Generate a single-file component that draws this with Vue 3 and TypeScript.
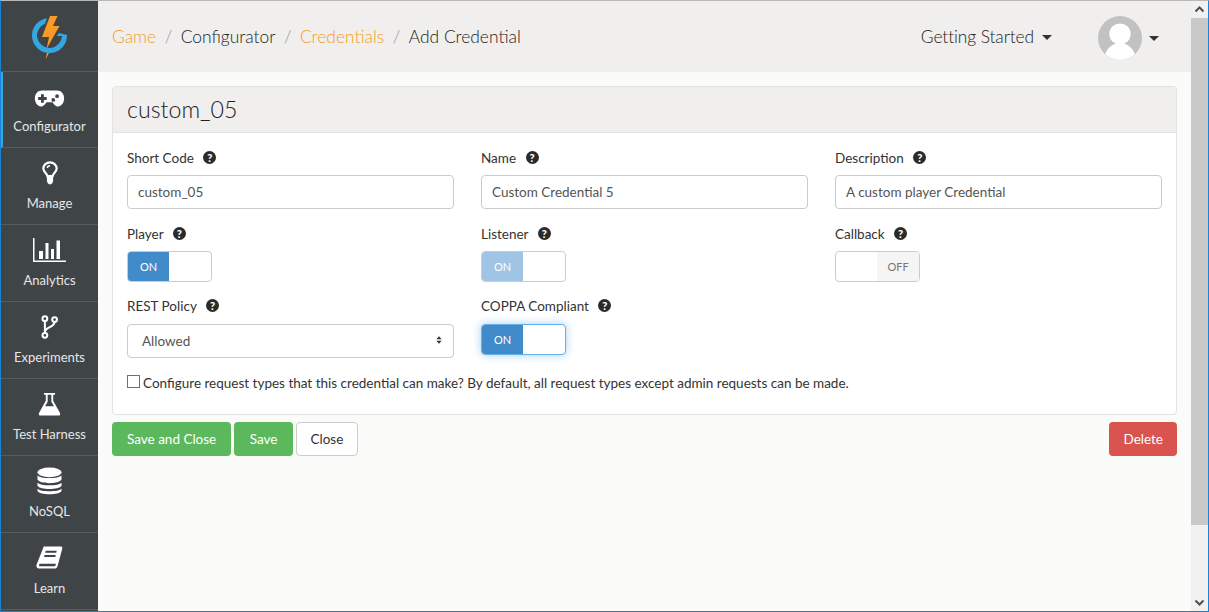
<script setup lang="ts">
const navItems = [
  { label: 'Configurator', icon: 'game', active: true },
  { label: 'Manage', icon: 'bulb', active: false },
  { label: 'Analytics', icon: 'chart', active: false },
  { label: 'Experiments', icon: 'fork', active: false },
  { label: 'Test Harness', icon: 'flask', active: false },
  { label: 'NoSQL', icon: 'db', active: false },
  { label: 'Learn', icon: 'book', active: false },
]
</script>

<template>
  <div class="window">
    <aside class="sidebar">
      <div class="logo">
        <svg width="36" height="44" viewBox="0 0 36 44">
          <path d="M15 2.200 A17.500 17.500 0 1 0 35 19 L27 17 L24.500 20 L30 20 A12.500 12.500 0 1 1 13 7.800 Z" fill="#35a7e0" />
          <path d="M18 0 H25.500 L21 10 H27.500 L14.500 33 L17 21 H10 Z" fill="#f79a28" />
          <path d="M15 37 L13.500 43.500 L17 37 Z" fill="#f79a28" />
        </svg>
      </div>
      <a v-for="item in navItems" :key="item.label" class="nav-item" :class="{ active: item.active }">
        <div class="nav-icon">
          <svg v-if="item.icon === 'game'" width="31" height="17" viewBox="0 1 32 18">
            <path fill-rule="evenodd" fill="#fff" d="M8 1.500 H24 C28.500 1.500 31.500 5 31.500 10 C31.500 14.500 28.500 18.500 25 18.500 C22 18.500 20.500 15.500 19 14 H13 C11.500 15.500 10 18.500 7 18.500 C3.500 18.500 0.500 14.500 0.500 10 C0.500 5 3.500 1.500 8 1.500 Z M7 5.500 V8.500 H4 V11.500 H7 V14.500 H10 V11.500 H13 V8.500 H10 V5.500 Z M24 5.500 A2 2 0 1 0 24 9.500 A2 2 0 1 0 24 5.500 Z M20 9.500 A2 2 0 1 0 20 13.500 A2 2 0 1 0 20 9.500 Z" />
          </svg>
          <svg v-else-if="item.icon === 'bulb'" width="16" height="24" viewBox="0 0 18 27">
            <path fill="none" stroke="#fff" stroke-width="2.400" d="M6 17 C5.500 13.500 1.500 12.500 1.500 8.500 C1.500 4.500 5 1.500 9 1.500 C13 1.500 16.500 4.500 16.500 8.500 C16.500 12.500 12.500 13.500 12 17 Z" />
            <path fill="none" stroke="#fff" stroke-width="1.500" d="M6 8 C6 6.500 7.200 5.300 9 5.300" />
            <path fill="#fff" d="M5.500 18 H12.500 V22 C12.500 24 11 26.500 9 26.500 C7 26.500 5.500 24 5.500 22 Z" />
          </svg>
          <svg v-else-if="item.icon === 'chart'" width="33" height="24" viewBox="0 0 33 24">
            <path fill="#fff" d="M0 0 H1.500 V22.500 H33 V24 H0 Z M6 13 H10 V21 H6 Z M12.500 5 H15.500 V21 H12.500 Z M18 11 H21 V21 H18 Z M23.500 2.500 H27 V21 H23.500 Z" />
          </svg>
          <svg v-else-if="item.icon === 'fork'" width="17" height="24" viewBox="0 0 18 26">
            <g fill="none" stroke="#fff" stroke-width="2.200">
              <circle cx="4" cy="4" r="2.600" />
              <circle cx="14.500" cy="5" r="2.600" />
              <circle cx="4" cy="22" r="2.600" />
              <path d="M4 6.500 V19.500 M14.500 7.500 C14.500 13 5 13 4 18" />
            </g>
          </svg>
          <svg v-else-if="item.icon === 'flask'" width="23" height="24" viewBox="0 0 24 26">
            <path fill-rule="evenodd" fill="#fff" d="M6 1 H18 V3 H16 V9.500 L23.500 23 C24 24.500 23 25.500 22 25.500 H2 C1 25.500 0 24.500 0.500 23 L8 9.500 V3 H6 Z M10 3 V10.500 L7.200 15.500 H16.800 L14 10.500 V3 Z" />
          </svg>
          <svg v-else-if="item.icon === 'db'" width="25" height="28" viewBox="0 0 26 29">
            <g fill="#fff">
              <ellipse cx="13" cy="5.500" rx="12.500" ry="5" />
              <path d="M0.500 8.500 C3 12.500 23 12.500 25.500 8.500 V13 C23 18 3 18 0.500 13 Z" />
              <path d="M0.500 16 C3 20 23 20 25.500 16 V19.500 C23 24 3 24 0.500 19.500 Z" />
              <path d="M0.500 22.500 C3 26 23 26 25.500 22.500 V25 C23 29.500 3 29.500 0.500 25 Z" />
            </g>
          </svg>
          <svg v-else-if="item.icon === 'book'" width="27" height="24" viewBox="0 0 28 25">
            <path fill-rule="evenodd" fill="#fff" d="M8 0.500 H26 C27.500 0.500 27.500 2 27.200 3 L22.500 20.500 C22 22.500 21 23.500 19 23.500 H3.500 C1 23.500 0 22 0.500 19.500 Z M10 5 L9.500 7 H21 L21.500 5 Z M8.800 9.500 L8.300 11.500 H20 L20.500 9.500 Z M4.500 18.500 C3 18.500 2.700 20 3.500 21 H19 C19.700 21 20.200 20.500 20.400 19.700 L20.700 18.500 Z" />
          </svg>
        </div>
        <span>{{ item.label }}</span>
      </a>
    </aside>

    <div class="main">
      <header class="topbar">
        <nav class="crumbs">
          <a class="link">Game</a><i>/</i>
          <span>Configurator</span><i>/</i>
          <a class="link">Credentials</a><i>/</i>
          <span>Add Credential</span>
        </nav>
        <div class="top-right">
          <span class="started">Getting Started <b class="caret"></b></span>
          <span class="avatar">
            <svg width="44" height="44" viewBox="0 0 44 44">
              <clipPath id="avatar-clip"><circle cx="22" cy="22" r="22" /></clipPath>
              <circle cx="22" cy="22" r="22" fill="#c2c2c2" />
              <g clip-path="url(#avatar-clip)">
                <ellipse cx="22" cy="18" rx="10.700" ry="10.500" fill="#fff" />
                <ellipse cx="22" cy="43" rx="15.500" ry="16" fill="#fff" />
              </g>
            </svg>
            <b class="caret"></b>
          </span>
        </div>
      </header>

      <div class="content">
        <section class="panel">
          <h2 class="panel-title">custom_05</h2>
          <div class="panel-body">
            <div class="grid">
              <div class="field">
                <label>Short Code <span class="help">?</span></label>
                <input class="control" value="custom_05" />
              </div>
              <div class="field">
                <label>Name <span class="help">?</span></label>
                <input class="control" value="Custom Credential 5" />
              </div>
              <div class="field">
                <label>Description <span class="help">?</span></label>
                <input class="control" value="A custom player Credential" />
              </div>

              <div class="field">
                <label>Player <span class="help">?</span></label>
                <div class="switch"><span class="on">ON</span><span></span></div>
              </div>
              <div class="field">
                <label>Listener <span class="help">?</span></label>
                <div class="switch disabled"><span class="on">ON</span><span></span></div>
              </div>
              <div class="field">
                <label>Callback <span class="help">?</span></label>
                <div class="switch"><span></span><span class="off">OFF</span></div>
              </div>

              <div class="field tall">
                <label>REST Policy <span class="help">?</span></label>
                <div class="control select">
                  <span>Allowed</span>
                  <svg class="updown" width="6" height="10" viewBox="0 0 8 11">
                    <path fill="#333" d="M4 0.500 L7.500 4.500 H0.500 Z M4 10.500 L0.500 6.500 H7.500 Z" />
                  </svg>
                </div>
              </div>
              <div class="field tall">
                <label>COPPA Compliant <span class="help">?</span></label>
                <div class="switch focused"><span class="on">ON</span><span></span></div>
              </div>
            </div>
            <label class="check"><span class="box"></span>Configure request types that this credential can make? By default, all request types except admin requests can be made.</label>
          </div>
        </section>

        <div class="actions">
          <button class="btn green">Save and Close</button>
          <button class="btn green save">Save</button>
          <button class="btn plain">Close</button>
          <button class="btn red">Delete</button>
        </div>
      </div>
    </div>

    <div class="scrollbar">
      <svg width="17" height="17" viewBox="0 0 17 17">
        <path d="M4.500 10.500 L8.500 6.500 L12.500 10.500" fill="none" stroke="#505050" stroke-width="2" />
      </svg>
      <div class="thumb"></div>
      <svg class="down" width="17" height="17" viewBox="0 0 17 17">
        <path d="M4.500 6.500 L8.500 10.500 L12.500 6.500" fill="none" stroke="#505050" stroke-width="2" />
      </svg>
    </div>
  </div>
</template>

<style>
html, body {
  margin: 0;
  height: 100%;
  overflow: hidden;
}
</style>

<style scoped>
.window {
  box-sizing: border-box;
  width: 1209px;
  height: 612px;
  display: flex;
  border: 1px solid #1883d7;
  border-top-color: #b8b8b8;
  font-family: Lato, "Open Sans", sans-serif;
  font-size: 13.5px;
  color: #333;
  background: #fbfbf9;
  overflow: hidden;
}

.sidebar {
  width: 97px;
  flex: none;
  background: #3f4447;
}

.logo {
  height: 66px;
  display: flex;
  align-items: center;
  justify-content: center;
  padding-top: 4px;
  border-bottom: 1px solid #565b5e;
}

.nav-item {
  box-sizing: border-box;
  height: 77px;
  display: flex;
  flex-direction: column;
  align-items: center;
  border-bottom: 1px solid #565b5e;
  color: #e6e6e6;
  font-size: 13px;
  line-height: 16px;
}

.nav-item.active {
  height: 76px;
  border-left: 2px solid #35a7e0;
  padding-right: 2px;
}

.nav-icon {
  box-sizing: border-box;
  height: 47px;
  padding-top: 3px;
  display: flex;
  align-items: center;
  justify-content: center;
}

.active .nav-icon {
  height: 46px;
  padding-top: 6px;
}

.main {
  flex: 1;
  min-width: 0;
  display: flex;
  flex-direction: column;
}

.topbar {
  box-sizing: border-box;
  height: 71px;
  flex: none;
  display: flex;
  align-items: center;
  justify-content: space-between;
  padding: 3px 32px 0 14px;
  background: #f0efee;
  font-size: 17.4px;
  font-weight: 300;
  color: #222;
}

.crumbs {
  display: flex;
  align-items: center;
  margin-bottom: 4px;
}

.crumbs i {
  font-style: normal;
  color: #999;
  margin: 0 8.5px;
}

.link {
  color: #f79a28;
}

.top-right {
  display: flex;
  align-items: center;
  gap: 46px;
}

.started,
.avatar {
  display: flex;
  align-items: center;
  gap: 8px;
}

.started {
  letter-spacing: -0.1px;
  margin-bottom: 4px;
}

.started .caret {
  margin-top: 2px;
}

.avatar {
  gap: 7px;
}

.avatar svg {
  display: block;
}

.caret {
  width: 0;
  height: 0;
  border-left: 5px solid transparent;
  border-right: 5px solid transparent;
  border-top: 5px solid #333;
}

.content {
  flex: 1;
  padding: 14px 14px 0;
}

.panel {
  box-sizing: border-box;
  height: 329px;
  background: #fff;
  border: 1px solid #e3e3e1;
  border-radius: 4px;
  overflow: hidden;
}

.panel-title {
  margin: 0;
  height: 46px;
  box-sizing: border-box;
  padding: 7px 14px 0;
  background: #f0efee;
  border-bottom: 1px solid #e3e3e1;
  font-size: 23.2px;
  line-height: 30px;
  font-weight: 300;
  color: #222;
}

.panel-body {
  padding: 15px 14px;
}

.grid {
  display: grid;
  grid-template-columns: repeat(3, 327px);
  grid-template-rows: 76px 72px 77px;
  column-gap: 27px;
}

.field label {
  display: block;
  height: 27px;
  line-height: 20px;
}

.field.tall label {
  height: 28px;
}

.help {
  display: inline-block;
  width: 13px;
  height: 13px;
  margin-left: 6px;
  border-radius: 50%;
  background: #2b2b2b;
  color: #fff;
  font-size: 11px;
  font-weight: 900;
  line-height: 13px;
  text-align: center;
  vertical-align: 1px;
}

.control {
  box-sizing: border-box;
  display: block;
  width: 327px;
  height: 34px;
  padding: 0 10px;
  border: 1px solid #ccc;
  border-radius: 4px;
  background: #fff;
  color: #555;
  font: inherit;
}

.select {
  position: relative;
  display: flex;
  align-items: center;
  padding-left: 14px;
}

.updown {
  position: absolute;
  right: 11px;
  top: 10px;
}

.switch {
  box-sizing: border-box;
  width: 85px;
  height: 31px;
  display: flex;
  border: 1px solid #ccc;
  border-radius: 4px;
  overflow: hidden;
  font-size: 11px;
  background: #fff;
}

.switch span {
  width: 41px;
  display: flex;
  align-items: center;
  justify-content: center;
}

.switch .on {
  background: #428bca;
  color: #fff;
}

.switch .off {
  flex: 1;
  background: #f5f5f5;
  color: #777;
}

.switch.disabled .on {
  background: #a0c5e4;
}

.switch.focused {
  border-color: #66afe9;
  box-shadow: 0 0 8px rgba(102, 175, 233, 0.6);
}

.check {
  display: flex;
  align-items: center;
  height: 20px;
}

.box {
  box-sizing: border-box;
  width: 13px;
  height: 13px;
  margin: 0 3px 3px 0;
  border: 1px solid #707070;
  background: #fff;
}

.actions {
  display: flex;
  gap: 3px;
  margin-top: 7px;
}

.btn {
  height: 34px;
  padding: 0 14px;
  border: 1px solid transparent;
  border-radius: 4px;
  font: inherit;
}

.btn.save {
  padding: 0 14.5px;
}

.plain {
  background: #fff;
  border-color: #ccc;
  color: #333;
}

.btn.plain {
  padding: 0 13.5px;
}

.green {
  background: #5cb85c;
  color: #fff;
}

.red {
  margin-left: auto;
  background: #d9534f;
  color: #fff;
}

.btn.red {
  padding: 0 13px;
}

.scrollbar {
  width: 17px;
  flex: none;
  display: flex;
  flex-direction: column;
  background: #f1f1f1;
}

.scrollbar svg {
  display: block;
}

.scrollbar .down {
  margin-top: auto;
}

.thumb {
  height: 507px;
  background: #c9c9c9;
}
</style>
